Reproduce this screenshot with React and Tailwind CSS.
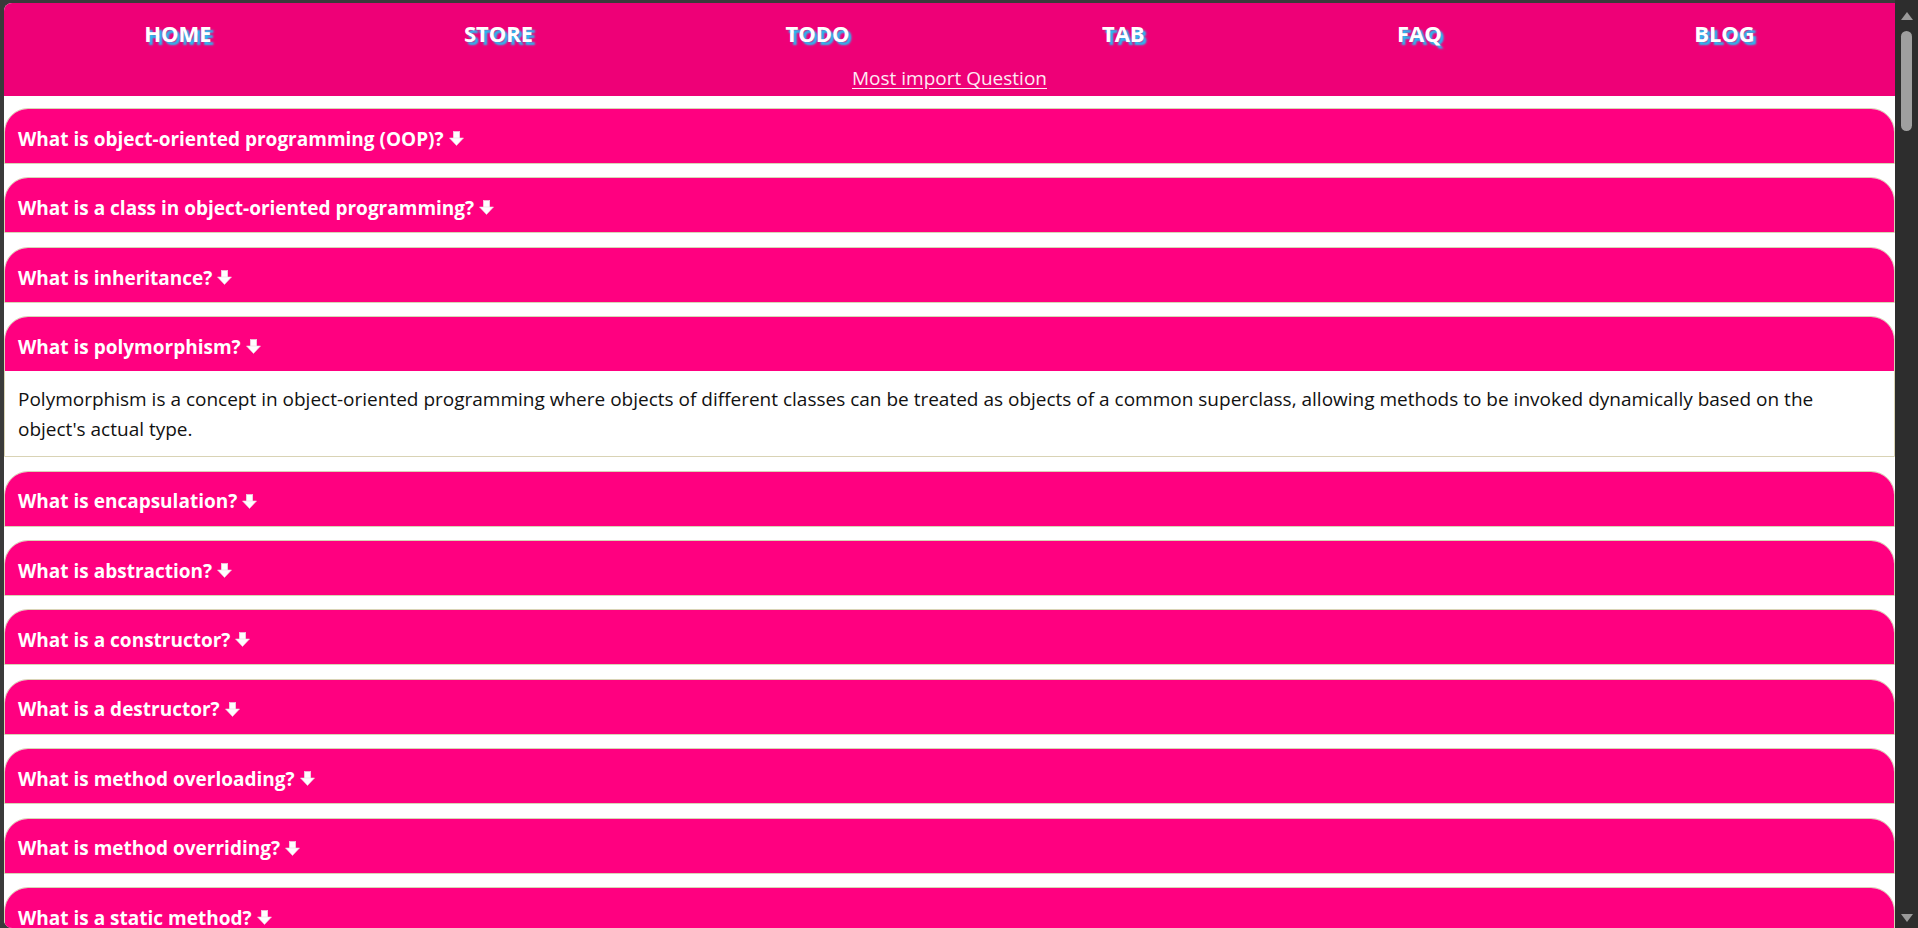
import React, { useState } from 'react';

const NAV_LINKS = ['HOME', 'STORE', 'TODO', 'TAB', 'FAQ', 'BLOG'];

const QUESTIONS = [
  {
    q: 'What is object-oriented programming (OOP)?',
    a: 'Object-oriented programming is a programming paradigm based on the concept of objects, which can contain data and code that manipulates that data.',
  },
  {
    q: 'What is a class in object-oriented programming?',
    a: 'A class is a blueprint for creating objects. It defines the properties and behaviors that the objects created from it will have.',
  },
  {
    q: 'What is inheritance?',
    a: 'Inheritance is a mechanism where a new class derives properties and behaviors from an existing class.',
  },
  {
    q: 'What is polymorphism?',
    a: "Polymorphism is a concept in object-oriented programming where objects of different classes can be treated as objects of a common superclass, allowing methods to be invoked dynamically based on the object's actual type.",
  },
  {
    q: 'What is encapsulation?',
    a: 'Encapsulation is the bundling of data and the methods that operate on that data within a single unit, hiding internal details.',
  },
  {
    q: 'What is abstraction?',
    a: 'Abstraction is hiding complex implementation details and showing only the essential features of an object.',
  },
  {
    q: 'What is a constructor?',
    a: 'A constructor is a special method that is called when an object is created, used to initialize its state.',
  },
  {
    q: 'What is a destructor?',
    a: 'A destructor is a special method that is called when an object is destroyed, used to release resources.',
  },
  {
    q: 'What is method overloading?',
    a: 'Method overloading is defining multiple methods with the same name but different parameters in the same class.',
  },
  {
    q: 'What is method overriding?',
    a: 'Method overriding is providing a new implementation of a method in a subclass that is already defined in its superclass.',
  },
  {
    q: 'What is a static method?',
    a: 'A static method belongs to the class rather than to any instance of the class.',
  },
  {
    q: 'What is an interface?',
    a: 'An interface defines a contract of methods that implementing classes must provide.',
  },
];

// down arrow drawn like the ⬇ glyph in the reference
const DownArrow = () => (
  <svg width="15" height="15" viewBox="0 0 15 15" className="inline-block ml-[5px] -mt-[1px] shrink-0">
    <rect x="4.3" y="0.5" width="6.4" height="7" fill="#fff" stroke="#ead8e1" strokeWidth="0.6" />
    <polygon points="0.5,7 14.5,7 7.5,14.5" fill="#fff" stroke="#ead8e1" strokeWidth="0.6" />
  </svg>
);

function App() {
  const [openIndex, setOpenIndex] = useState(3);

  const toggle = (i) => {
    setOpenIndex(openIndex === i ? null : i);
  };

  return (
    <div className="h-screen w-full flex overflow-hidden bg-[#3a3a3a] pt-[3px] pl-[4px] font-['Open_Sans','Noto_Sans',sans-serif]">
      <div className="flex-1 min-w-0 bg-white overflow-hidden rounded-tl-[8px] rounded-bl-[8px]">
        {/* header */}
        <header className="h-[93px] bg-[#ee0077] flex flex-col">
          <nav className="h-[60px] flex items-center justify-around px-[14px]">
            {NAV_LINKS.map((link) => (
              <a
                key={link}
                href="#"
                className="text-white font-bold text-[22px] leading-none [text-shadow:3px_3px_2px_#1fc3f5]"
              >
                {link}
              </a>
            ))}
          </nav>
          <div className="h-[30px] flex items-center justify-center">
            <a href="#" className="text-[19px] text-[#fdeaf3] underline underline-offset-[3px]">
              Most import Question
            </a>
          </div>
        </header>

        {/* accordion */}
        <div className="pt-[12px]">
          {QUESTIONS.map((item, i) => (
            <div key={item.q} className="mb-[13.4px] border border-[#d9d3b5] rounded-t-[24px]">
              <button
                onClick={() => toggle(i)}
                className="w-full h-[54px] flex items-center pl-[13px] pt-[6px] bg-[#ff0080] rounded-t-[23px] text-left text-white font-bold text-[19px]"
              >
                <span>{item.q}</span>
                <DownArrow />
              </button>
              {openIndex === i && (
                <div className="px-[13px] pt-[13px] pb-[12px] text-[19px] leading-[30px] text-[#111]">
                  {item.a}
                </div>
              )}
            </div>
          ))}
        </div>
      </div>

      {/* scrollbar */}
      <div className="w-[23px] -mt-[3px] bg-[#2d2d2d] flex flex-col items-center">
        <div className="mt-[12px] w-0 h-0 border-l-[6px] border-r-[6px] border-b-[8px] border-l-transparent border-r-transparent border-b-[#9a9a9a]" />
        <div className="mt-[11px] w-[11px] h-[100px] rounded-full bg-[#9f9f9f]" />
        <div className="mt-auto mb-[6px] w-0 h-0 border-l-[6px] border-r-[6px] border-t-[8px] border-l-transparent border-r-transparent border-t-[#9a9a9a]" />
      </div>
    </div>
  );
}

export default App;
